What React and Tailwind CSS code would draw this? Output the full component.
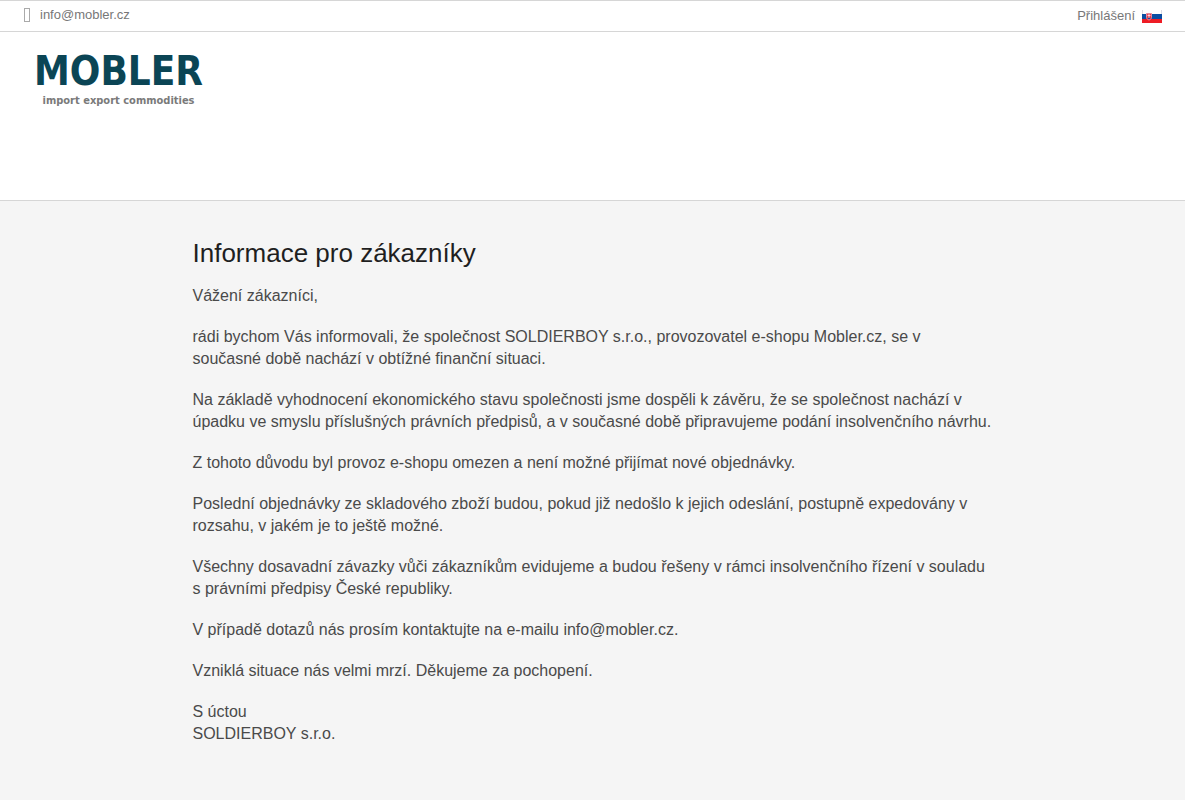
import React from 'react';

const paragraphs = [
  'Vážení zákazníci,',
  'rádi bychom Vás informovali, že společnost SOLDIERBOY s.r.o., provozovatel e-shopu Mobler.cz, se v současné době nachází v obtížné finanční situaci.',
  'Na základě vyhodnocení ekonomického stavu společnosti jsme dospěli k závěru, že se společnost nachází v úpadku ve smyslu příslušných právních předpisů, a v současné době připravujeme podání insolvenčního návrhu.',
  'Z tohoto důvodu byl provoz e-shopu omezen a není možné přijímat nové objednávky.',
  'Poslední objednávky ze skladového zboží budou, pokud již nedošlo k jejich odeslání, postupně expedovány v rozsahu, v jakém je to ještě možné.',
  'Všechny dosavadní závazky vůči zákazníkům evidujeme a budou řešeny v rámci insolvenčního řízení v souladu s právními předpisy České republiky.',
  'V případě dotazů nás prosím kontaktujte na e-mailu info@mobler.cz.',
  'Vzniklá situace nás velmi mrzí. Děkujeme za pochopení.',
];

const SlovakFlag = () => (
  <svg width="20" height="14" viewBox="0 0 20 14" role="img" aria-label="Slovensky">
    <rect width="20" height="5" fill="#fff" />
    <path d="M0 1h1v4H0zM19 1h1v4h-1z" fill="#dcdce4" />
    <rect y="5" width="20" height="5" fill="#0b4ea2" />
    <rect y="10" width="20" height="4" fill="#ee1c25" />
    <path d="M4.500 4.500h5v4c0 1.200-1 2-2.500 2.500-1.500-.5-2.500-1.300-2.500-2.500z" fill="#e8384a" stroke="#e58a9c" />
    <path d="M7 5v4M5.500 6.500h3" stroke="#fff" strokeWidth="0.700" />
    <path d="M5.500 9.200c.5-.6 1-.6 1.500-.1.500-.5 1-.5 1.500.1l-1.500 1z" fill="#0b4ea2" />
  </svg>
);

const TopBar = () => (
  <div className="flex h-8 items-center justify-between border-y border-[#d6d6d6] pl-6 pr-[23px] text-[13px] leading-5 text-[#777777]">
    <a href="mailto:info@mobler.cz" className="flex items-center gap-2.5 pb-0.5">
      <span className="h-3.5 w-1.5 border border-[#aaaaaa]" />
      info@mobler.cz
    </a>
    <div className="flex items-center gap-[7px]">
      <a href="#login">Přihlášení</a>
      <a href="#sk">
        <SlovakFlag />
      </a>
    </div>
  </div>
);

const Logo = () => (
  <a href="/" className="flex w-fit flex-col items-center font-['DejaVu_Sans_Condensed','DejaVu_Sans',sans-serif] font-bold">
    <span className="text-[40px] leading-10 text-[#0b4555]">MOBLER</span>
    <span className="text-[11px] leading-5 text-[#7a7a7a]">import export commodities</span>
  </a>
);

const App = () => {
  return (
    <div className="flex min-h-screen flex-col bg-white pr-[15px] font-['Liberation_Sans',Arial,sans-serif]">
      <TopBar />
      <header className="h-[169px] border-b border-[#d6d6d6] pl-[34px] pt-[19px]">
        <Logo />
      </header>
      <main className="grow bg-[#f5f5f5] pt-9">
        <div className="mx-auto max-w-[800px] text-base leading-[22px] text-[#4a4a4a]">
          <h1 className="mb-4 text-[26px] leading-8 text-[#1f1f1f]">Informace pro zákazníky</h1>
          <div className="flex flex-col gap-[19px]">
            {paragraphs.map(text => (
              <p key={text}>{text}</p>
            ))}
            <p>
              S úctou
              <br />
              SOLDIERBOY s.r.o.
            </p>
          </div>
        </div>
      </main>
    </div>
  );
};

export default App;
